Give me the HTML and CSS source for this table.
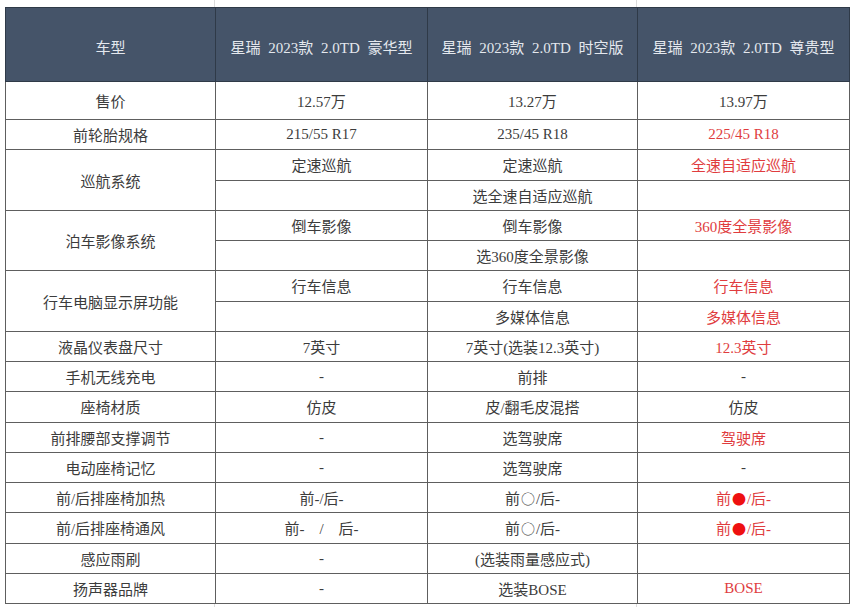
FILE: index.html
```html
<!DOCTYPE html>
<html lang="zh-CN">
<head>
<meta charset="utf-8">
<title>星瑞 2023款 配置对比</title>
<link rel="stylesheet" href="styles.css">
</head>
<body>
<div class="sheet">
  <div class="ghost"><span></span><span></span><span></span></div>
  <table class="spec">
    <colgroup>
      <col class="c1"><col class="c2"><col class="c3"><col class="c4">
    </colgroup>
    <thead>
      <tr>
        <th>车型</th>
        <th>星瑞 2023款 2.0TD 豪华型</th>
        <th>星瑞 2023款 2.0TD 时空版</th>
        <th>星瑞 2023款 2.0TD 尊贵型</th>
      </tr>
    </thead>
    <tbody>
      <tr class="price"><td>售价</td><td>12.57万</td><td>13.27万</td><td>13.97万</td></tr>
      <tr><td>前轮胎规格</td><td>215/55 R17</td><td>235/45 R18</td><td class="hl">225/45 R18</td></tr>
      <tr><td rowspan="2">巡航系统</td><td>定速巡航</td><td>定速巡航</td><td class="hl">全速自适应巡航</td></tr>
      <tr><td></td><td>选全速自适应巡航</td><td></td></tr>
      <tr><td rowspan="2">泊车影像系统</td><td>倒车影像</td><td>倒车影像</td><td class="hl">360度全景影像</td></tr>
      <tr><td></td><td>选360度全景影像</td><td></td></tr>
      <tr><td rowspan="2">行车电脑显示屏功能</td><td>行车信息</td><td>行车信息</td><td class="hl">行车信息</td></tr>
      <tr><td></td><td>多媒体信息</td><td class="hl">多媒体信息</td></tr>
      <tr><td>液晶仪表盘尺寸</td><td>7英寸</td><td>7英寸(选装12.3英寸)</td><td class="hl">12.3英寸</td></tr>
      <tr><td>手机无线充电</td><td>-</td><td>前排</td><td>-</td></tr>
      <tr><td>座椅材质</td><td>仿皮</td><td>皮/翻毛皮混搭</td><td>仿皮</td></tr>
      <tr><td>前排腰部支撑调节</td><td>-</td><td>选驾驶席</td><td class="hl">驾驶席</td></tr>
      <tr><td>电动座椅记忆</td><td>-</td><td>选驾驶席</td><td>-</td></tr>
      <tr><td>前/后排座椅加热</td><td>前-/后-</td><td>前<span class="dot">○</span>/后-</td><td class="hl">前<span class="dot fill">●</span>/后-</td></tr>
      <tr><td>前/后排座椅通风</td><td>前-&nbsp;&nbsp;&nbsp;&nbsp;/&nbsp;&nbsp;&nbsp;&nbsp;后-</td><td>前<span class="dot">○</span>/后-</td><td class="hl">前<span class="dot fill">●</span>/后-</td></tr>
      <tr><td>感应雨刷</td><td>-</td><td>(选装雨量感应式)</td><td></td></tr>
      <tr><td>扬声器品牌</td><td>-</td><td>选装BOSE</td><td class="hl">BOSE</td></tr>
    </tbody>
  </table>
  <div class="ghost"><span></span><span></span><span></span></div>
</div>
</body>
</html>
```
FILE: styles.css
```css
html, body {
  margin: 0;
  padding: 0;
  background: #ffffff;
}

body {
  font-family: "Liberation Serif", "Noto Sans CJK SC", serif;
  font-size: 15px;
  color: #3c3c3c;
}

.sheet {
  padding-left: 5px;
  width: 844px;
}

.ghost {
  display: grid;
  grid-template-columns: 210px 422px 212px;
  height: 7px;
}

.ghost span {
  border-right: 1px solid #dcdcdc;
}

.ghost span:last-child {
  border-right: none;
}

.sheet > .ghost:last-child {
  height: 4px;
}

.spec {
  border-collapse: collapse;
  table-layout: fixed;
  width: 844px;
}

.spec .c1 { width: 210px; }
.spec .c2 { width: 212px; }
.spec .c3 { width: 210px; }
.spec .c4 { width: 212px; }

.spec th,
.spec td {
  border: 1px solid #5e5e5e;
  padding: 0;
  text-align: center;
  vertical-align: middle;
  white-space: nowrap;
  font-weight: normal;
}

.spec thead tr {
  height: 74px;
}

.spec th {
  background: #455469;
  color: #e4e8ee;
  word-spacing: 4px;
  padding-top: 3px;
  border-color: #2f3a48;
}

.spec tbody tr {
  height: 30.25px;
}

.spec tbody tr.price {
  height: 38px;
}

.spec td.hl {
  color: #e03c3e;
}

.dot {
  font-family: "Noto Sans CJK SC", sans-serif;
  font-size: 14px;
  padding: 0 1px;
}

.dot.fill {
  color: #ee1010;
}
```
